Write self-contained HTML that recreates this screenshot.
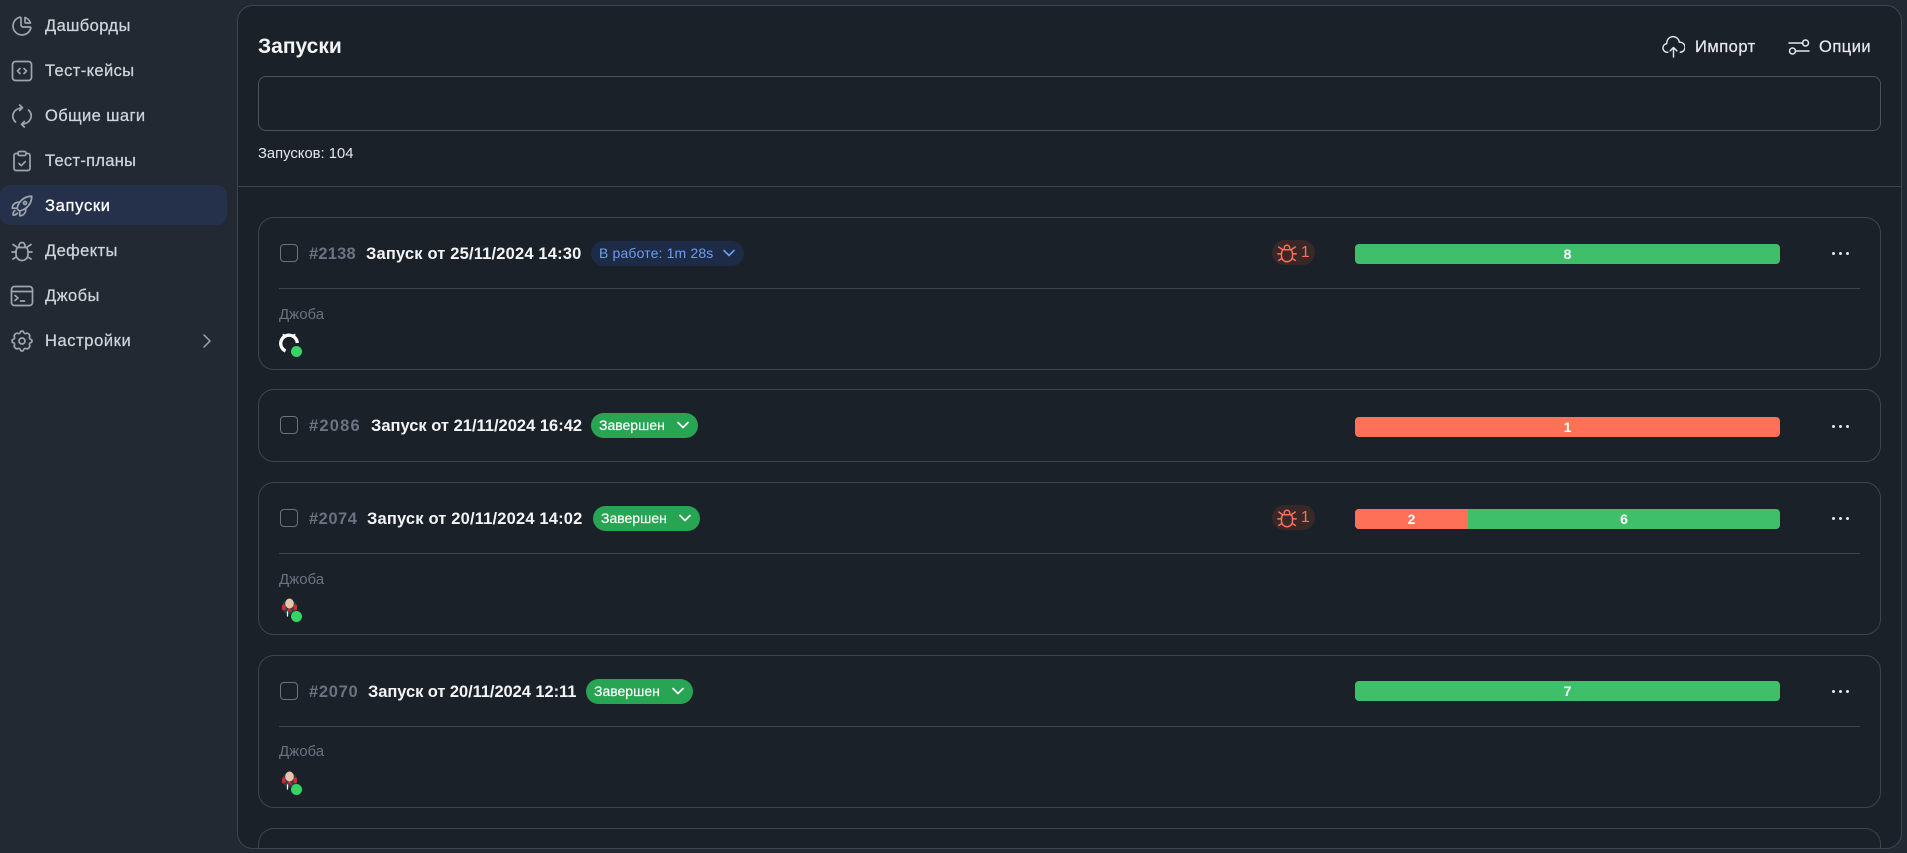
<!DOCTYPE html>
<html lang="ru"><head><meta charset="utf-8"><title>Запуски</title>
<style>
*{box-sizing:border-box}
html,body{margin:0;padding:0}
body{width:1907px;height:853px;position:relative;overflow:hidden;background:#232933;font-family:"Liberation Sans",sans-serif;color:#fff}
.a{position:absolute;white-space:nowrap}
svg.i{position:absolute;fill:none;stroke-linecap:round;stroke-linejoin:round}
.nav{position:absolute;left:45px;font-size:16.5px;letter-spacing:.4px;line-height:20px;color:#d0d4da;-webkit-text-stroke:.25px #d0d4da;white-space:nowrap}
.side{stroke:#9ea5ae;stroke-width:1.7;width:24px;height:24px;left:10px}
.panel{position:absolute;left:237px;top:5px;width:1665px;height:844px;background:#1b2129;border:1px solid #3d4452;border-radius:16px;overflow:hidden}
.card{position:absolute;left:258px;width:1623px;border:1px solid #3d4452;border-radius:16px}
.cb{position:absolute;left:280px;width:18px;height:18px;border:1px solid #6b7280;border-radius:4px}
.num{position:absolute;font-size:16.5px;font-weight:700;color:#6b7280;line-height:20px;white-space:nowrap}
.ttl{position:absolute;font-size:16.5px;font-weight:700;color:#f3f4f6;line-height:20px;white-space:nowrap}
.badge{position:absolute;height:25px;border-radius:13px;font-size:14px;line-height:25px;white-space:nowrap}
.done{background:#27a552;color:#fff;width:107px;padding-left:8px;-webkit-text-stroke:.2px #fff}
.bug{position:absolute;left:1272px;width:43px;height:25px;background:#3a2829;border-radius:13px;color:#ff7059;font-size:15.5px;line-height:25px;padding-left:29px}
.bar{position:absolute;left:1355px;width:425px;height:20px;border-radius:4px;overflow:hidden;background:#40bf6a;color:#fff;font-size:14px;font-weight:700;line-height:20px;text-align:center}
.dots{position:absolute;left:1832px;width:15px;height:3px}
.dots i{position:absolute;top:0;width:3px;height:3px;border-radius:50%;background:#e5e7eb}
.div{position:absolute;left:279px;width:1581px;height:1px;background:#3d4452}
.lbl{position:absolute;left:279px;font-size:15px;line-height:18px;color:#6b7280;white-space:nowrap}
.dot{position:absolute;left:291px;width:11px;height:11px;border-radius:50%;background:#34d564}
</style></head><body>

<div class="a" style="left:0;top:185px;width:227px;height:40px;background:#25304a;border-radius:10px"></div>

<svg class="i side" style="top:14px" viewBox="0 0 24 24"><path d="M10 3.2a9 9 0 1 0 10.8 10.8a1 1 0 0 0 -1 -1h-6.8a2 2 0 0 1 -2 -2v-7a.9 .9 0 0 0 -1 -.8"/><path d="M15 3.5a9 9 0 0 1 5.5 5.5h-4.5a1 1 0 0 1 -1 -1v-4.5"/></svg>
<div class="nav" style="top:16px">Дашборды</div>
<svg class="i side" style="top:59px" viewBox="0 0 24 24"><rect x="2.5" y="2.5" width="19" height="19" rx="3"/><path d="M10 9.5l-2.5 2.5l2.5 2.5M14 9.5l2.5 2.5l-2.5 2.5"/></svg>
<div class="nav" style="top:61px">Тест-кейсы</div>
<svg class="i side" style="top:104px" viewBox="0 0 24 24"><path d="M5.500 18A10 8.500 0 0 1 12.500 3.700M9.700 1l2.800 2.700l-2.800 2.800"/><path d="M18.500 6A10 8.500 0 0 1 11.500 20.300M14.300 17.500l-2.800 2.800l2.800 2.700"/></svg>
<div class="nav" style="top:106px">Общие шаги</div>
<svg class="i side" style="top:149px" viewBox="0 0 24 24"><path d="M8 4.500h-2a2 2 0 0 0 -2 2v13a2 2 0 0 0 2 2h12a2 2 0 0 0 2 -2v-13a2 2 0 0 0 -2 -2h-2"/><rect x="8" y="2.500" width="8" height="4" rx="1.500"/><path d="M9 14.500l2.200 2.200l4 -4"/></svg>
<div class="nav" style="top:151px;letter-spacing:.3px">Тест-планы</div>
<svg class="i side" style="top:194px" viewBox="0 0 24 24"><path d="M15.590 14.370a6 6 0 0 1-5.840 7.380v-4.800m5.840-2.580a14.980 14.980 0 0 0 6.160-12.120A14.980 14.980 0 0 0 9.631 8.410m5.960 5.960a14.926 14.926 0 0 1-5.841 2.580m-.119-8.540a6 6 0 0 0-7.381 5.840h4.800m2.581-5.840a14.927 14.927 0 0 0-2.580 5.840m2.699 2.700c-.103.021-.207.041-.311.060a15.090 15.090 0 0 1-2.448-2.448 14.900 14.900 0 0 1 .060-.312m-2.240 2.390a4.493 4.493 0 0 0-1.757 4.306 4.493 4.493 0 0 0 4.306-1.758M16.500 9a1.500 1.500 0 1 1-3 0 1.500 1.500 0 0 1 3 0Z"/></svg>
<div class="nav" style="top:196px;color:#fff;letter-spacing:.7px;-webkit-text-stroke:.3px #fff">Запуски</div>
<svg class="i side" style="top:239px" viewBox="0 0 24 24"><path d="M9 7.500v-1a3 3 0 0 1 6 0v1"/><path d="M7.500 8.500h9a6 6 0 0 1 1.500 4v3a6 6 0 0 1 -12 0v-3a6 6 0 0 1 1.500 -4"/><path d="M2 13h4M18 13h4M3 20l3.500 -2.200M21 20l-3.500 -2.200M3 5.500l4.500 3M21 5.500l-4.500 3"/></svg>
<div class="nav" style="top:241px">Дефекты</div>
<svg class="i side" style="top:284px" viewBox="0 0 24 24"><rect x="1.500" y="2.500" width="21" height="19" rx="3"/><path d="M1.500 7.500h21M5 11.500l3 2.500l-3 2.500M10.500 17h4"/></svg>
<div class="nav" style="top:286px">Джобы</div>
<svg class="i side" style="top:329px" viewBox="0 0 24 24"><path d="M10.325 3.317c.426 -1.756 2.924 -1.756 3.350 0a1.724 1.724 0 0 0 2.573 1.066c1.543 -.94 4.310 1.826 3.370 3.370a1.724 1.724 0 0 0 1.065 2.572c1.756 .426 1.756 2.924 0 3.350a1.724 1.724 0 0 0 -1.066 2.573c.94 1.543 -1.826 4.310 -3.370 3.370a1.724 1.724 0 0 0 -2.572 1.065c-.426 1.756 -2.924 1.756 -3.350 0a1.724 1.724 0 0 0 -2.573 -1.066c-1.543 .94 -4.310 -1.826 -3.370 -3.370a1.724 1.724 0 0 0 -1.065 -2.572c-1.756 -.426 -1.756 -2.924 0 -3.350a1.724 1.724 0 0 0 1.066 -2.573c-.94 -1.543 1.826 -4.310 3.370 -3.370c1 .608 2.296 .07 2.572 -1.065z"/><circle cx="12" cy="12" r="3"/></svg>
<div class="nav" style="top:331px;letter-spacing:.6px">Настройки</div>
<svg class="i" style="left:200px;top:333px;width:14px;height:16px;stroke:#9ea5ae;stroke-width:1.5" viewBox="0 0 14 16"><path d="M4 2l6 6l-6 6"/></svg>

<div class="panel"></div>

<div class="a" style="left:258px;top:34px;font-size:21px;font-weight:700;line-height:26px;color:#f3f4f6">Запуски</div>

<svg class="i" style="left:1662px;top:35px;width:23px;height:23px;stroke:#e5e7eb;stroke-width:1.500" viewBox="0 0 24 24"><path d="M6 18a4.500 4.500 0 0 1 -1 -9a6.500 6.500 0 0 1 13 -1.500h.5a5.200 5.200 0 0 1 .5 10.500"/><path d="M12 23v-10M8.500 16.500l3.500 -3.500l3.500 3.500"/></svg>
<div class="a" style="left:1695px;top:37px;font-size:16.500px;letter-spacing:.5px;line-height:20px;color:#e5e7eb;-webkit-text-stroke:.25px #e5e7eb">Импорт</div>
<svg class="i" style="left:1787px;top:35px;width:24px;height:24px;stroke:#e5e7eb;stroke-width:1.500" viewBox="0 0 24 24"><path d="M2 8h14M9 16h13"/><circle cx="18.500" cy="8" r="3"/><circle cx="5.500" cy="16" r="3"/></svg>
<div class="a" style="left:1819px;top:37px;font-size:16.500px;letter-spacing:.5px;line-height:20px;color:#e5e7eb;-webkit-text-stroke:.25px #e5e7eb">Опции</div>

<div class="a" style="left:258px;top:76px;width:1623px;height:55px;border:1px solid #4b5363;border-radius:8px"></div>
<div class="a" style="left:258px;top:145px;font-size:14.800px;line-height:18px;color:#e5e7eb">Запусков: 104</div>
<div class="a" style="left:238px;top:186px;width:1663px;height:1px;background:#3d4452"></div>

<!-- Card 1 -->
<div class="card" style="top:217px;height:153px"></div>
<div class="cb" style="top:244px"></div>
<div class="num" style="left:309px;top:244px;letter-spacing:.2px">#2138</div>
<div class="ttl" style="left:366px;top:244px;letter-spacing:.17px">Запуск от 25/11/2024 14:30</div>
<div class="badge" style="left:591px;top:241px;width:153px;background:#1e2b47;color:#6d9eeb;padding-left:8px;letter-spacing:.15px">В работе: 1m 28s</div>
<svg class="i" style="left:722px;top:247px;width:14px;height:12px;stroke:#6d9eeb;stroke-width:1.600" viewBox="0 0 14 12"><path d="M2 3.500l5 5l5 -5"/></svg>
<div class="bug" style="top:240px">1</div>
<svg class="i" style="left:1276px;top:242px;width:22px;height:22px;stroke:#ff7059;stroke-width:1.600" viewBox="0 0 24 24"><path d="M9 7.500v-1a3 3 0 0 1 6 0v1"/><path d="M7.500 8.500h9a6 6 0 0 1 1.500 4v3a6 6 0 0 1 -12 0v-3a6 6 0 0 1 1.500 -4"/><path d="M2 13h4M18 13h4M3 20l3.500 -2.200M21 20l-3.500 -2.200M3 5.500l4.500 3M21 5.500l-4.500 3"/></svg>
<div class="bar" style="top:244px">8</div>
<div class="dots" style="top:252px"><i style="left:0"></i><i style="left:7px"></i><i style="left:14px"></i></div>
<div class="div" style="top:288px"></div>
<div class="lbl" style="top:306px">Джоба</div>
<svg class="i" style="left:279px;top:333px;width:20px;height:20px" viewBox="0 0 20 20"><path d="M6.500 18A8.300 8.300 0 1 1 18.300 10" stroke="#fff" stroke-width="3.300" stroke-linecap="butt"/><path d="M4.500 1.800l.8 2M15.500 1.800l-.8 2" stroke="#fff" stroke-width="2"/></svg>
<div class="dot" style="top:346px"></div>

<!-- Card 2 -->
<div class="card" style="top:389px;height:73px"></div>
<div class="cb" style="top:416px"></div>
<div class="num" style="left:309px;top:416px;letter-spacing:1.200px">#2086</div>
<div class="ttl" style="left:371px;top:416px">Запуск от 21/11/2024 16:42</div>
<div class="badge done" style="left:591px;top:413px">Завершен</div>
<svg class="i" style="left:676px;top:419px;width:14px;height:12px;stroke:#fff;stroke-width:1.700" viewBox="0 0 14 12"><path d="M2 3.500l5 5l5 -5"/></svg>
<div class="bar" style="top:417px;background:#ff7059">1</div>
<div class="dots" style="top:425px"><i style="left:0"></i><i style="left:7px"></i><i style="left:14px"></i></div>

<!-- Card 3 -->
<div class="card" style="top:482px;height:153px"></div>
<div class="cb" style="top:509px"></div>
<div class="num" style="left:309px;top:509px;letter-spacing:.5px">#2074</div>
<div class="ttl" style="left:367px;top:509px;letter-spacing:.17px">Запуск от 20/11/2024 14:02</div>
<div class="badge done" style="left:593px;top:506px">Завершен</div>
<svg class="i" style="left:678px;top:512px;width:14px;height:12px;stroke:#fff;stroke-width:1.700" viewBox="0 0 14 12"><path d="M2 3.500l5 5l5 -5"/></svg>
<div class="bug" style="top:505px">1</div>
<svg class="i" style="left:1276px;top:507px;width:22px;height:22px;stroke:#ff7059;stroke-width:1.600" viewBox="0 0 24 24"><path d="M9 7.500v-1a3 3 0 0 1 6 0v1"/><path d="M7.500 8.500h9a6 6 0 0 1 1.500 4v3a6 6 0 0 1 -12 0v-3a6 6 0 0 1 1.500 -4"/><path d="M2 13h4M18 13h4M3 20l3.500 -2.200M21 20l-3.500 -2.200M3 5.500l4.500 3M21 5.500l-4.500 3"/></svg>
<div class="bar" style="top:509px"><div style="position:absolute;left:0;top:0;width:113px;height:20px;background:#ff7059">2</div><div style="position:absolute;left:113px;top:0;width:312px;height:20px">6</div></div>
<div class="dots" style="top:517px"><i style="left:0"></i><i style="left:7px"></i><i style="left:14px"></i></div>
<div class="div" style="top:553px"></div>
<div class="lbl" style="top:571px">Джоба</div>
<svg class="i" style="left:282px;top:598px;width:15px;height:19px" viewBox="0 0 15 19"><circle cx="7.500" cy="9" r="7.300" fill="#2f3d50"/><path d="M.5 6.500a7.300 7.300 0 0 0 0 6l3 -1V7zM14.500 6.500a7.300 7.300 0 0 1 0 6l-3 -1V7z" fill="#c8322b"/><ellipse cx="7.500" cy="5.500" rx="4.300" ry="5" fill="#e6c6ac"/><path d="M6 10.500h3l1 3h-5z" fill="#b5302b"/><path d="M5.500 14v4" stroke="#fff" stroke-width="1.300"/></svg>
<div class="dot" style="top:611px"></div>

<!-- Card 4 -->
<div class="card" style="top:655px;height:153px"></div>
<div class="cb" style="top:682px"></div>
<div class="num" style="left:309px;top:682px;letter-spacing:.7px">#2070</div>
<div class="ttl" style="left:368px;top:682px;letter-spacing:-.07px">Запуск от 20/11/2024 12:11</div>
<div class="badge done" style="left:586px;top:679px">Завершен</div>
<svg class="i" style="left:671px;top:685px;width:14px;height:12px;stroke:#fff;stroke-width:1.700" viewBox="0 0 14 12"><path d="M2 3.500l5 5l5 -5"/></svg>
<div class="bar" style="top:681px">7</div>
<div class="dots" style="top:690px"><i style="left:0"></i><i style="left:7px"></i><i style="left:14px"></i></div>
<div class="div" style="top:726px"></div>
<div class="lbl" style="top:743px">Джоба</div>
<svg class="i" style="left:282px;top:771px;width:15px;height:19px" viewBox="0 0 15 19"><circle cx="7.500" cy="9" r="7.300" fill="#2f3d50"/><path d="M.5 6.500a7.300 7.300 0 0 0 0 6l3 -1V7zM14.500 6.500a7.300 7.300 0 0 1 0 6l-3 -1V7z" fill="#c8322b"/><ellipse cx="7.500" cy="5.500" rx="4.300" ry="5" fill="#e6c6ac"/><path d="M6 10.500h3l1 3h-5z" fill="#b5302b"/><path d="M5.500 14v4" stroke="#fff" stroke-width="1.300"/></svg>
<div class="dot" style="top:784px"></div>

<!-- Card 5, clipped at the panel's bottom edge -->
<div class="a" style="left:258px;top:828px;width:1623px;height:20px;border:1px solid #3d4452;border-bottom:0;border-radius:16px 16px 0 0"></div>

</body></html>
